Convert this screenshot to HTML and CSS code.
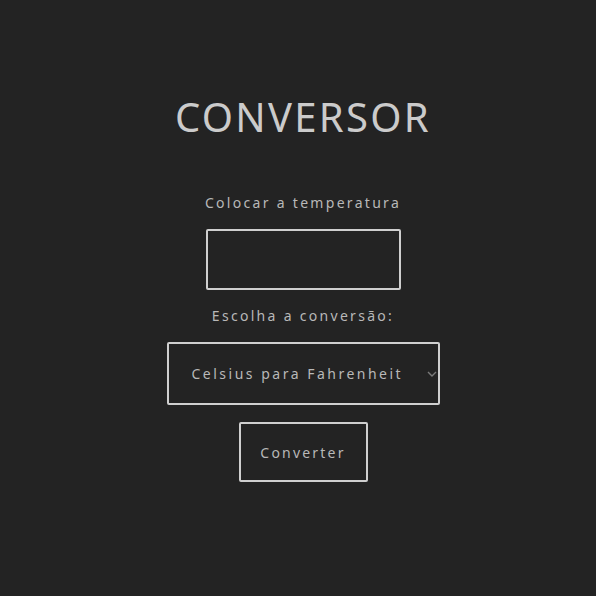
FILE: index.html
```html
<!DOCTYPE html>
<html lang="pt">
<head>
<meta charset="utf-8">
<title>Conversor</title>
<link rel="stylesheet" href="styles.css">
</head>
<body>
<main class="app">
  <h1 class="title">CONVERSOR</h1>
  <label class="label" for="temp">Colocar a temperatura</label>
  <input class="field" id="temp" type="text">
  <label class="label label-second" for="conv">Escolha a conversão:</label>
  <div class="select-wrap">
    <select class="select" id="conv">
      <option>Celsius para Fahrenheit</option>
      <option>Fahrenheit para Celsius</option>
    </select>
    <svg class="chevron" width="10" height="6" viewBox="0 0 10 6" aria-hidden="true">
      <path d="M1 1 L5 5 L9 1" fill="none" stroke="#7a7a7a" stroke-width="1.4"/>
    </svg>
  </div>
  <button class="button" type="button">Converter</button>
</main>
</body>
</html>
```
FILE: styles.css
```css
html, body {
  margin: 0;
  padding: 0;
  background: #232323;
  height: 100%;
}
body {
  font-family: "Noto Sans", "Open Sans", sans-serif;
  color: #c8c8c8;
}
.app {
  display: flex;
  flex-direction: column;
  align-items: center;
  padding-top: 91px;
  padding-left: 10px;
}
.title {
  margin: 0;
  font-size: 40px;
  font-weight: 400;
  letter-spacing: 2.3px;
  line-height: 52px;
  color: #cbcbcb;
}
.label {
  margin-top: 50px;
  font-size: 14px;
  letter-spacing: 2.3px;
  line-height: 20px;
  color: #b8b8b8;
}
.label-second {
  margin-top: 16px;
}
.field {
  margin-top: 16px;
  width: 195px;
  height: 61px;
  box-sizing: border-box;
  border: 2px solid #cfcfcf;
  border-radius: 2px;
  background: transparent;
  color: #c8c8c8;
  outline: none;
}
.select-wrap {
  position: relative;
  margin-top: 16px;
  width: 273px;
  height: 63px;
}
.select {
  appearance: none;
  -webkit-appearance: none;
  width: 100%;
  height: 100%;
  box-sizing: border-box;
  border: 2px solid #cfcfcf;
  border-radius: 2px;
  background: transparent;
  color: #b8b8b8;
  font-family: inherit;
  font-size: 14px;
  letter-spacing: 2.5px;
  padding: 0 30px 0 23px;
}
.chevron {
  position: absolute;
  right: 3px;
  top: 29px;
}
.button {
  margin-top: 17px;
  width: 129px;
  height: 60px;
  box-sizing: border-box;
  border: 2px solid #cfcfcf;
  border-radius: 2px;
  background: transparent;
  color: #b8b8b8;
  font-family: inherit;
  font-size: 14px;
  letter-spacing: 2.2px;
}
```
